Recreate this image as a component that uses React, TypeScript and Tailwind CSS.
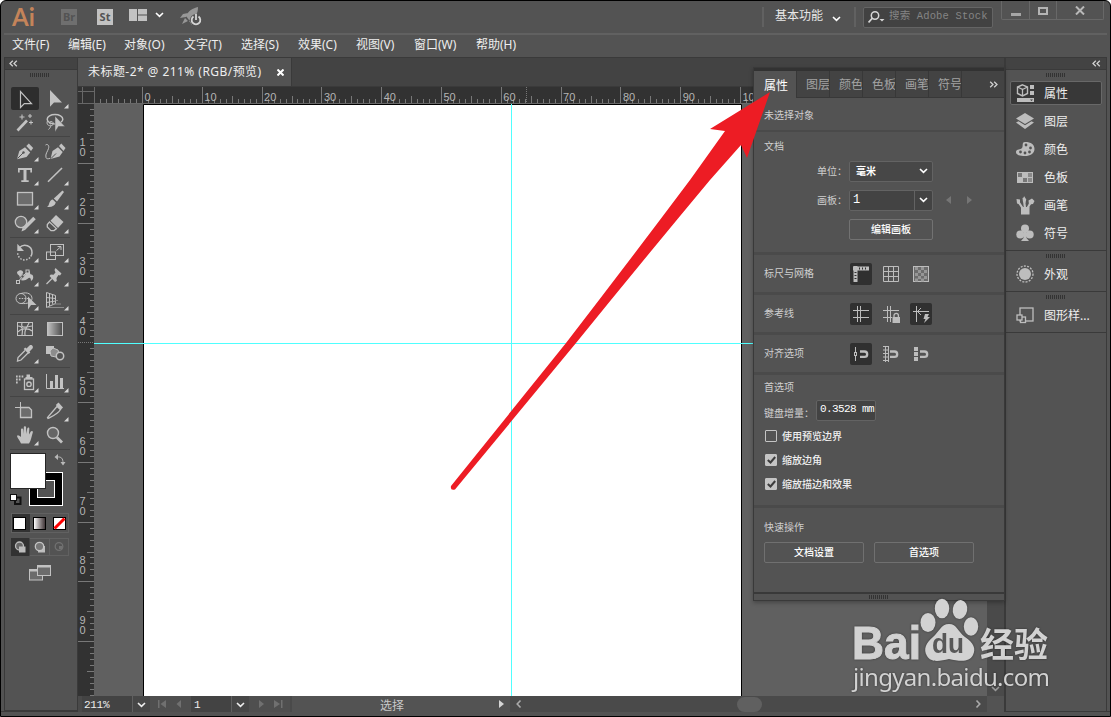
import { useState } from 'react'
import type { ReactNode } from 'react'

const menus = [
  { label: '文件(F)', width: 'w-[56px]' },
  { label: '编辑(E)', width: 'w-[56px]' },
  { label: '对象(O)', width: 'w-[60px]' },
  { label: '文字(T)', width: 'w-[57px]' },
  { label: '选择(S)', width: 'w-[57px]' },
  { label: '效果(C)', width: 'w-[58px]' },
  { label: '视图(V)', width: 'w-[58px]' },
  { label: '窗口(W)', width: 'w-[62px]' },
  { label: '帮助(H)', width: 'w-[56px]' },
]

// every tool is drawn in a 30x24 cell
const corner = <path d="M28.5 18v4.5H24z" fill="#d6d6d6" stroke="none" />

const toolGroups: { icon: ReactNode; more?: boolean; active?: boolean }[][] = [
  [
    { icon: <path d="M10.500 4.500V20.500L14.300 16.600H21.500Z" fill="none" strokeWidth="1.200" />, active: true },
    { icon: <path d="M10 4V20.800L14 16.600H22Z" stroke="none" />, more: true },
    {
      icon: (
        <>
          <path d="M7.500 20.500L17 10.500" strokeWidth="2.600" />
          <path d="M12 4.500v5M9.500 7h5M20 4v4M18 6h4M21 10.500v4M19 12.500h4" strokeWidth="1.100" />
        </>
      ),
    },
    {
      icon: (
        <>
          <ellipse cx="15" cy="9.300" rx="7.800" ry="4.700" fill="none" strokeWidth="1.500" />
          <path d="M7.500 11c-1.500 3 1 5.500 4 4.500 3-1 2-4-.5-4-2 0-2 2.500 0 2.500M11 15.500c-.5 2-1.500 3-2.500 4" fill="none" />
          <path d="M15 6V22L18.500 16.500H25Z" stroke="#535353" strokeWidth=".5" />
        </>
      ),
    },
  ],
  [
    {
      icon: (
        <>
          <path d="M7 20.200L9.300 12 15 8.300 20.200 13.500 16.500 18Z" stroke="none" />
          <path d="M16.300 7L18.800 4.600 23.200 9 21 12Z" stroke="none" />
          <path d="M7.500 19.500L13 14" stroke="#535353" />
          <circle cx="13.500" cy="13.500" r="1.200" fill="#535353" stroke="none" />
        </>
      ),
      more: true,
    },
    {
      icon: (
        <>
          <path d="M10.500 20L12.500 12 18 8.300 22.700 13 19.500 17.500Z" stroke="none" />
          <path d="M19 7L21.300 4.600 25.500 9 23.500 12Z" stroke="none" />
          <path d="M11 19.500L16 14.500" stroke="#535353" />
          <path d="M5.500 6c2-1.500 4 .5 3 3.500-.8 3-3.500 5.500-2.500 9 .5 1.500 2 1.500 4 .8" fill="none" />
        </>
      ),
    },
    {
      icon: <path d="M8 5H22V9.500H20.300V7H16.500V17.300H18.700V19H11.300V17.300H13.500V7H9.700V9.500H8Z" stroke="none" />,
      more: true,
    },
    { icon: <path d="M8 18.700L22 5" strokeWidth="1.600" />, more: true },
    { icon: <rect x="7.500" y="5.500" width="15" height="12.500" fill="#6c6c6c" strokeWidth="1.300" />, more: true },
    {
      icon: (
        <>
          <path d="M22.500 3.500L24 5 17 14.500 13.800 11.500Z" stroke="none" />
          <path d="M12.800 12.500l3 3c-.8 3.500-4.800 5-8.800 4.200 2-1 1.700-2.200 2.500-4.200.6-1.600 1.700-2.800 3.300-3z" stroke="none" />
        </>
      ),
      more: true,
    },
    {
      icon: (
        <>
          <circle cx="11" cy="11" r="5.700" fill="#6c6c6c" strokeWidth="1.300" />
          <path d="M14 17.500L24.500 7" strokeWidth="3.600" />
          <path d="M11.500 20.500L12.700 16 15.500 18.800Z" stroke="none" />
        </>
      ),
      more: true,
    },
    {
      icon: (
        <>
          <path d="M16 4L23.500 11 18 17 10.500 9.700Z" stroke="none" />
          <path d="M9.500 11L16.500 17.600 14 19.600H11L7.300 16V13.500Z" fill="none" strokeWidth="1.300" />
        </>
      ),
      more: true,
    },
  ],
  [
    {
      icon: (
        <>
          <path d="M9.500 7.500C14 3 22 5.500 22 12.500c0 1.500-.5 3-1.300 4" fill="none" strokeWidth="1.500" />
          <path d="M20 17.500C16 22 8 20 7.700 13" fill="none" strokeWidth="1.500" strokeDasharray="1.500 1.500" />
          <path d="M7.300 3.800V11H14Z" stroke="none" />
        </>
      ),
      more: true,
    },
    {
      icon: (
        <>
          <rect x="10.500" y="4.500" width="13" height="11" fill="none" />
          <rect x="6.500" y="12" width="9" height="7.500" fill="none" />
          <path d="M16.500 10.500L20.500 7M17.500 6.500H21V10" fill="none" />
        </>
      ),
      more: true,
    },
    {
      icon: (
        <>
          <path d="M7 8c3-3 6-2 6.500 1 .6 3 2 1.500 3-1 1.200-3 3.500-2 3.500.5s1.500 1.500 2.500 2.500c1.500 2 .5 5-1.500 6 0-3-1.500-4-3-2.500-2 2-5 2.500-8 1.500-1-2 .5-3-1-4.500-1-1-2-1.500-2-3.500z" stroke="none" />
          <path d="M7.500 18.500L15 8.500" stroke="#535353" strokeWidth="2.500" />
          <path d="M7.500 18.500L12 13 17 8" />
          <rect x="6.500" y="16.500" width="3" height="3" fill="#535353" />
          <circle cx="12.500" cy="12.500" r="1.700" fill="#535353" />
          <rect x="16" y="6" width="3" height="3" fill="#535353" />
        </>
      ),
      more: true,
    },
    {
      icon: (
        <>
          <path d="M15.500 4L21.500 9.500 20 11.500 18.500 11 16.500 14 16.800 17 15 18 9.500 12 10.800 10.500 13.500 10.700 15.500 8.500 14.500 6Z" stroke="none" />
          <path d="M12 14.500L6.500 20" strokeWidth="1.300" />
        </>
      ),
      more: true,
    },
    {
      icon: (
        <>
          <circle cx="11" cy="10.500" r="5" fill="none" />
          <path d="M11 5.500C18 3.500 22 6.500 22 10.500S17 16 11.500 15.500" fill="none" />
          <path d="M9 10.500H19" strokeDasharray="1.500 1.200" />
          <path d="M18 8.500V21.500L21 17H26.500Z" stroke="none" />
        </>
      ),
      more: true,
    },
    {
      icon: (
        <>
          <path d="M6.500 4.500L15.500 7.500V15.500L6.500 19.500ZM9.500 5.500V18M12.500 6.500V16.500M6.500 9.500L15.500 10.500M6.500 14.500L15.500 13" fill="none" />
          <path d="M15.500 12.500H18M12 16H21M8 19.500H24" stroke="#8c8c8c" />
        </>
      ),
      more: true,
    },
  ],
  [
    {
      icon: (
        <>
          <rect x="7.500" y="5.500" width="15" height="13" fill="none" />
          <path d="M8 9c5 0 5 4 4 9.500M12 6c-2 6 5 4 10 3M8 15c3-4 11-4 14-1M15 18c-1-5 2-8 4-12" fill="none" strokeWidth="1.200" />
        </>
      ),
    },
    {
      icon: (
        <>
          <defs>
            <linearGradient id="toolGradient">
              <stop offset="0" stopColor="#c2c2c2" />
              <stop offset="1" stopColor="#4a4a4a" />
            </linearGradient>
          </defs>
          <rect x="7.500" y="5.500" width="15" height="13" fill="url(#toolGradient)" />
        </>
      ),
    },
    {
      icon: (
        <>
          <path d="M16.500 7.500l3-3c2-1.500 4.500 1 3 3l-3 3 .8 1-1.600 1.500-5-5L15.200 6.500z" stroke="none" />
          <path d="M15 9.500L8 16.500 7.500 20 11 19 18 12" fill="none" strokeWidth="1.300" />
        </>
      ),
      more: true,
    },
    {
      icon: (
        <>
          <rect x="6" y="5" width="8" height="8" stroke="none" />
          <path d="M10 10l3-3 5 2 1 4-3 3-5-1z" fill="#8d8d8d" strokeWidth="1" />
          <circle cx="20" cy="15" r="3.700" fill="#535353" strokeWidth="1.500" />
        </>
      ),
    },
  ],
  [
    {
      icon: (
        <>
          <rect x="14.500" y="9" width="9" height="10.500" fill="none" strokeWidth="1.300" />
          <path d="M16.500 7V4.500H20V7H22.500V9H15.500V7Z" stroke="none" />
          <circle cx="19" cy="14.200" r="2.200" fill="none" strokeWidth="1.400" />
          <path d="M6 6.500H13.500M6 9.500H11M6 12.500H8" strokeWidth="1.800" strokeDasharray="1.700 1.100" />
        </>
      ),
      more: true,
    },
    {
      icon: (
        <>
          <path d="M6.500 4V18.500H24" fill="none" />
          <path d="M10 11h3v7h-3zM15 5h3v13h-3zM20 8h3v10h-3z" stroke="none" />
        </>
      ),
      more: true,
    },
  ],
  [
    {
      icon: (
        <>
          <path d="M5 8.500H13M10.500 3V10" fill="none" />
          <path d="M10.500 8.500H19L21.500 11V18.500H10.500Z" fill="#6c6c6c" strokeWidth="1.300" />
        </>
      ),
    },
    {
      icon: (
        <>
          <path d="M17 7.500L7.500 18.500 8 19.500C13 17 18 15 20.500 10.500Z" fill="none" strokeWidth="1.300" />
          <path d="M15.800 6L18.500 3.500 23 8.500 20.500 11Z" stroke="none" />
        </>
      ),
      more: true,
    },
    {
      icon: (
        <path
          d="M11 20.500C9.500 17 7 14.500 7 13c.5-1.500 2-.8 4 1V6.500c0-1.500 2-1.500 2.300 0l.5 4.500V4.500c0-1.600 2.200-1.600 2.300 0V11l1.200-5.500c.4-1.500 2.200-1.200 2 .4L19 11.500 20.800 8.500c.8-1.200 2.500-.4 2 .9C21.500 13 21 18 19 20.500Z"
          stroke="none"
        />
      ),
      more: true,
    },
    {
      icon: (
        <>
          <circle cx="13" cy="10" r="5.500" fill="#666" strokeWidth="1.400" />
          <path d="M17 14.500L22 19.500" strokeWidth="2.800" />
        </>
      ),
    },
  ],
]

const swatchIcon = (
  <>
    <rect x="1" y="4" width="16" height="11" />
    <path d="M2 5h4v4H2zM7 10h4v4H7z" fill="#777" />
    <path d="M12 5h4v4h-4zM12 10h4v4h-4z" fill="#8a8a8a" />
  </>
)

const dockItems = [
  {
    label: '属性',
    icon: (
      <>
        <path d="M6.500 .8L11.500 3V9.500L6.500 12 1.500 9.500V3Z" fill="none" stroke="#bdbdbd" strokeWidth="1.400" />
        <path d="M1.500 3L6.500 5.500V12M6.500 5.500L11.500 3" fill="none" stroke="#bdbdbd" strokeWidth="1.300" />
        <path d="M14 1h4v4h-4zM14 7h4v4h-4zM1 14h17v4H1z" />
        <path d="M14 15.500h3l-1.500 1.500z" fill="#333" />
      </>
    ),
  },
  {
    label: '图层',
    icon: (
      <>
        <path d="M9 1L18 6.500 9 12 0 6.500Z" />
        <path d="M0 10.500l2.500-1.200L9 13.200l6.500-3.900L18 10.500 9 17Z" />
      </>
    ),
  },
  {
    label: '颜色',
    icon: (
      <>
        <path d="M9 2c6 0 9.500 2.500 9.500 7S14 16 9 16c-5 0-9-1-9-4 0-3 3-2 5.500-3.500S5 2 9 2z" />
        <circle cx="10" cy="5" r="1.400" fill="#535353" />
        <circle cx="14.500" cy="8" r="1.400" fill="#535353" />
        <circle cx="13.500" cy="12" r="1.400" fill="#535353" />
        <circle cx="9" cy="13" r="1.400" fill="#535353" />
        <circle cx="4.500" cy="12" r="1.400" fill="#535353" />
      </>
    ),
  },
  { label: '色板', icon: swatchIcon },
  {
    label: '画笔',
    icon: (
      <>
        <path d="M5 11h8.500v7.500H5z" />
        <path d="M6.500 12L2.500 6M9 12L8 4M11.500 12L15 6" fill="none" stroke="#bdbdbd" strokeWidth="2.200" />
        <path d="M.5 3l3.500 .5V8.500L1 7.500zM6.500 2c1.500 0 1.500-2 1.500-2l2.300 3.500-1 3.500-2.300-1zM12.500 4.500L16 2.500l2.500 2.500-1.500 3-4 .5z" />
      </>
    ),
  },
  {
    label: '符号',
    icon: (
      <>
        <circle cx="9" cy="4.500" r="4" />
        <circle cx="4.300" cy="10.500" r="4" />
        <circle cx="13.700" cy="10.500" r="4" />
        <path d="M8 8h2l.5 6L13 17H5l2.500-3z" />
      </>
    ),
  },
]

function ToolIcon({ children, more, active }: { children: ReactNode; more?: boolean; active?: boolean }) {
  return (
    <div className="flex h-6 w-[30px] items-center justify-center">
      <div className={active ? 'my-px h-[23px] w-7 rounded-xs bg-[#2d2d2d]' : 'h-6 w-[30px]'}>
        <svg
          width="30"
          height="24"
          viewBox="0 0 30 24"
          fill="#c2c2c2"
          stroke="#c2c2c2"
          className={active ? '-ml-px' : ''}
        >
          {children}
          {more && corner}
        </svg>
      </div>
    </div>
  )
}

function Chevron({ className = '' }: { className?: string }) {
  return (
    <svg width="9" height="6" viewBox="0 0 9 6" className={className} fill="none" stroke="currentColor" strokeWidth="1.600">
      <path d="M1 1L4.500 4.300 8 1" />
    </svg>
  )
}

function Collapse({ flip }: { flip?: boolean }) {
  return (
    <svg width="9" height="7" viewBox="0 0 9 7" fill="none" stroke="#d0d0d0" strokeWidth="1.300" className={flip ? 'rotate-180' : ''}>
      <path d="M3.800 .8L1 3.500 3.800 6.200M7.800 .8L5 3.500 7.800 6.200" />
    </svg>
  )
}

function Grip() {
  return (
    <svg width="20" height="4" className="shrink-0" shapeRendering="crispEdges">
      <path d="M0 2H19" stroke="#333" strokeWidth="4" strokeDasharray="1 1" />
    </svg>
  )
}

function TitleBar() {
  return (
    <div className="flex h-8 shrink-0">
      <div className="flex flex-1 items-center pl-[11px]">
        <span className="w-[49px] font-[Lato] text-[24px] leading-none font-bold text-[#c4845a]">Ai</span>
        <span className="flex h-4 w-4 items-center justify-center bg-[#6f6f6f] text-[11px] font-bold text-[#535353]">Br</span>
        <span className="ml-5 flex h-4 w-4 items-center justify-center bg-[#c2c2c2] text-[11px] font-bold text-[#535353]">St</span>
        <svg width="18" height="12" className="ml-4 -mt-1" fill="#c2c2c2">
          <path d="M0 0h8v12H0zM9 0h9v5.500H9zM9 6.500h9V12H9z" />
        </svg>
        <Chevron className="ml-2 -mt-1 text-white" />
        <svg width="23" height="20" viewBox="0 0 23 20" className="ml-4" fill="#979797">
          <path d="M18 0c-5 1-10 4-12 9l3 4c6-2 9-6 9-13zM8 6L3 7 0 11l6-1zM14 11l-2 7-3-4zM5 11l-3 6 6-3z" />
          <circle cx="16" cy="13" r="6" fill="#535353" />
          <path d="M13.500 9.500a4.300 4.300 0 1 0 5 0M16 7v6" fill="none" stroke="#d5d5d5" strokeWidth="1.800" />
        </svg>
      </div>
      <div className="mt-[6px] h-5 w-0.5 bg-[#616161]" />
      <div className="flex w-[90px] items-center pl-[11px] text-[12px] text-[#e8e8e8]">
        <span className="-mt-0.5">基本功能</span>
        <Chevron className="mt-1 ml-[9px] text-white" />
      </div>
      <div className="mt-[6px] h-5 w-0.5 bg-[#616161]" />
      <div className="mt-[6px] ml-[7px] flex h-[21px] w-[130px] items-center rounded-xs border border-[#646464] bg-[#424242]">
        <svg width="17" height="13" viewBox="0 0 17 13" className="mx-1 shrink-0" fill="none" stroke="#d6d6d6">
          <circle cx="7" cy="4.500" r="3.700" strokeWidth="1.500" />
          <path d="M4.500 7L.5 11.500" strokeWidth="1.800" />
          <path d="M11.500 8h5l-2.500 2.500z" fill="#d6d6d6" stroke="none" />
        </svg>
        <span className="-mt-0.5 font-['Liberation_Mono','Noto_Sans_CJK_SC',monospace] text-[10.500px] tracking-[0.15px] whitespace-nowrap text-[#858585]">
          搜索 Adobe Stock
        </span>
      </div>
      <div className="ml-2 flex h-[19px] w-[103px] rounded-b-xs border border-t-0 border-[#686868]">
        <div className="flex w-[28px] items-center justify-center border-r border-[#686868]">
          <div className="mt-2 h-[3px] w-[10px] bg-[#a6a6a6]" />
        </div>
        <div className="flex w-[27px] items-center justify-center border-r border-[#686868]">
          <div className="mt-0.5 h-2 w-[10px] border-2 border-[#b4b4b4]" />
        </div>
        <div className="flex flex-1 items-center justify-center">
          <svg width="10" height="9" stroke="#b8b8b8" strokeWidth="2">
            <path d="M1 0.500L9 8.500M9 .5L1 8.500" />
          </svg>
        </div>
      </div>
      <div className="w-[6px]" />
    </div>
  )
}

function ColorControls() {
  return (
    <div className="-mt-px flex flex-col pl-[5px]">
      <svg width="60" height="62" viewBox="0 0 60 62" fill="none">
        <rect x="19.500" y="21.500" width="33" height="33" fill="#000" stroke="#fff" />
        <rect x="27.500" y="29.500" width="17" height="17" fill="#535353" stroke="#fff" />
        <rect x=".5" y="2.500" width="35" height="35" fill="#fff" stroke="#262626" />
        <path d="M47 6c4.500-.5 6 1.500 6 6" stroke="#b8b8b8" />
        <path d="M48 3v6L44.500 6zM50.500 11h5L53 14.500z" fill="#b8b8b8" />
        <rect x="5" y="46.500" width="5.500" height="6.500" stroke="#111" strokeWidth="2" />
        <rect x=".5" y="43.500" width="6" height="6" fill="#fff" stroke="#111" />
      </svg>
      <div className="ml-px flex h-5 w-[58px] items-center border border-[#616161]">
        <div className="flex h-full w-[18px] items-center bg-[#323232] pl-px">
          <div className="h-[13px] w-[13px] border border-black bg-white" />
        </div>
        <div className="w-5 pl-[3px]">
          <div className="h-[13px] w-[13px] border border-black bg-linear-to-r from-white to-[#42383a]" />
        </div>
        <svg width="13" height="13" className="ml-[3px]">
          <rect x=".5" y=".5" width="12" height="12" fill="#fff" stroke="#000" />
          <path d="M1.500 11.500L11.500 1.500" stroke="#f00" strokeWidth="3" />
        </svg>
      </div>
      <svg width="58" height="18" className="mt-[5px] ml-px">
        <rect x=".5" y=".5" width="57" height="17" fill="none" stroke="#616161" />
        <path d="M0 0h18.500v18H0z" fill="#323232" />
        <path d="M38.500 0v18" stroke="#616161" />
        <circle cx="8.500" cy="8" r="4" fill="#666" stroke="#bbb" strokeWidth="1.300" />
        <rect x="8" y="8.500" width="6.500" height="6" fill="#bdbdbd" />
        <rect x="27" y="8" width="7" height="6.500" fill="#bdbdbd" />
        <circle cx="28.500" cy="8.500" r="4.200" fill="#777" stroke="#c4c4c4" strokeWidth="1.300" />
        <circle cx="48" cy="8.500" r="3.800" fill="none" stroke="#717171" strokeWidth="1.300" />
        <rect x="48" y="8" width="3" height="3" fill="#717171" />
      </svg>
      <svg width="22" height="16" className="mt-[9px] ml-[19px]" stroke="#c2c2c2" fill="#6c6c6c">
        <rect x=".5" y="4.500" width="13" height="10.500" />
        <path d="M.5 5.500h13" strokeWidth="2" />
        <rect x="8.500" y=".5" width="13" height="10" />
        <path d="M8 1.500h14" strokeWidth="2" />
      </svg>
    </div>
  )
}

function ToolsPanel() {
  return (
    <div className="flex w-[73px] shrink-0 flex-col border border-r-0 border-[#3a3a3a]">
      <div className="flex h-3 shrink-0 items-center border-b border-[#3a3a3a] bg-[#434343] pl-1">
        <Collapse />
      </div>
      <div className="flex h-4 shrink-0 justify-center pt-[3px] pr-[3px]">
        <Grip />
      </div>
      {toolGroups.map((group, i) => (
        <div key={i} className="flex shrink-0 flex-col pl-[5px]">
          <div className="flex w-[60px] flex-wrap">
            {group.map((tool, j) => (
              <ToolIcon key={j} more={tool.more} active={tool.active}>
                {tool.icon}
              </ToolIcon>
            ))}
          </div>
          <div className="mt-0.5 mb-0.5 h-px w-[60px] bg-[#444]" />
        </div>
      ))}
      <ColorControls />
    </div>
  )
}

const MM = 5.98

function TopRuler() {
  const ticks = Array.from({ length: 118 }, (_, i) => i - 8)
  return (
    <svg width="909" height="17" className="block shrink-0 bg-[#323232] font-['Liberation_Sans',sans-serif] text-[11px]">
      {ticks.map((t) => {
        const x = Math.round(64 + t * MM) + 0.5
        const top = t % 10 === 0 ? 0 : t % 5 === 0 ? 9 : 12
        return <path key={t} d={`M${x} ${top}V16`} stroke="#787878" />
      })}
      {[0, 10, 20, 30, 40, 50, 60, 70, 80, 90, 100].map((n) => (
        <text key={n} x={66.5 + n * MM} y="14" fill="#b4b4b4">
          {n}
        </text>
      ))}
      <path d="M448.500 0V16" stroke="#777" strokeDasharray="1 1" />
      <path d="M0 0H16V17H0Z" fill="#323232" />
      <path d="M4.500 0V17M0 4.500H16M16.500 0V17M0 16.500H909" stroke="#686868" />
    </svg>
  )
}

function SideRuler() {
  const ticks = Array.from({ length: 99 }, (_, i) => i + 1)
  return (
    <svg width="16" height="592" className="block shrink-0 bg-[#323232] font-['Liberation_Sans',sans-serif] text-[11px]">
      {ticks.map((t) => {
        const y = Math.round(-1 + t * MM) + 0.5
        const left = t % 10 === 0 ? 0 : t % 5 === 0 ? 9 : 12
        return <path key={t} d={`M${left} ${y}H16`} stroke="#787878" strokeDasharray={t === 40 ? '1 1' : undefined} />
      })}
      {[1, 2, 3, 4, 5, 6, 7, 8, 9].map((n) => (
        <g key={n} fill="#b4b4b4">
          <text x="1.500" y={n * 59.8 - 18}>{n}</text>
          <text x="1.500" y={n * 59.8 - 8}>0</text>
        </g>
      ))}
    </svg>
  )
}

function StatusBar() {
  return (
    <div className="flex h-4 shrink-0 items-center bg-[#4a4a4a] font-['Liberation_Mono',monospace] text-[11px] text-[#eee]">
      <div className="ml-1 h-4 w-[50px] bg-[#434343] pl-0.5 leading-[18px] tracking-[-0.3px]">211%</div>
      <div className="flex h-4 w-[18px] items-center justify-center border-l border-[#606060] bg-[#474747]">
        <Chevron className="mt-0.5" />
      </div>
      <svg width="41" height="16" fill="#707070" className="bg-[#4f4f4f]">
        <path d="M8 4h1.500v8H8zM16 4v8L10.500 8zM31 4v8L26.500 8z" />
      </svg>
      <div className="h-4 w-[40px] bg-[#434343] pl-[3px] leading-[18px]">1</div>
      <div className="flex h-4 w-[18px] items-center justify-center border-l border-[#606060] bg-[#474747]">
        <Chevron className="mt-0.5" />
      </div>
      <svg width="41" height="16" fill="#707070" className="bg-[#4f4f4f]">
        <path d="M10 4v8L15 8zM25 4v8L31 8zM32 4h1.500v8H32z" />
      </svg>
      <div className="ml-0.5 h-4 w-[200px] bg-[#535353] text-center font-['Noto_Sans_CJK_SC',sans-serif] text-[12px] leading-[18px] text-[#c8c8c8]">
        选择
      </div>
      <svg width="18" height="16" className="bg-[#535353]">
        <path d="M7 4v8L12 8z" fill="#d6d6d6" />
      </svg>
      <Chevron className="ml-1 rotate-90 text-[#aaa]" />
      <div className="ml-[214px] h-[15px] w-[25px] rounded-full bg-[#606060]" />
      <Chevron className="ml-[212px] -rotate-90 text-[#aaa]" />
      <div className="ml-[4px] h-4 flex-1 bg-[#535353]" />
    </div>
  )
}

function Document() {
  return (
    <div className="flex w-[926px] shrink-0 flex-col">
      <div className="flex h-[30px] shrink-0 border-y border-[#3a3a3a] bg-[#434343]">
        <div className="flex w-[214px] items-center justify-between border-r border-[#3a3a3a] bg-[#535353] pr-[7px] pl-[10px] text-[12px] text-[#eee]">
          <span className="tracking-[0.45px] whitespace-nowrap">未标题-2* @ 211% (RGB/预览)</span>
          <svg width="7" height="7" stroke="#fff" strokeWidth="2">
            <path d="M.5 .5L6.500 6.500M6.500 .5L.5 6.500" />
          </svg>
        </div>
      </div>
      <TopRuler />
      <div className="flex h-[592px] shrink-0">
        <SideRuler />
        <div className="flex w-[893px] bg-[#606060]">
          <svg width="893" height="592">
            <path d="M49.500 592V.5H647.500V592" fill="#fff" stroke="#000" />
            <path d="M0 239.500H893M417.500 0V592" stroke="#4fffff" />
          </svg>
        </div>
        <div className="flex flex-1 items-end justify-center bg-[#4a4a4a] pb-1">
          <Chevron className="text-[#999]" />
        </div>
      </div>
      <StatusBar />
    </div>
  )
}

function DockItem({ label, icon, active }: { label: string; icon: ReactNode; active?: boolean }) {
  return (
    <div
      className={`mx-1 flex h-6 items-center rounded-xs border pl-[5px] text-[12px] text-[#eee] ${
        active ? 'border-[#686868] bg-[#383838]' : 'border-transparent'
      }`}
    >
      <svg width="19" height="19" viewBox="0 0 19 19" fill="#bdbdbd">
        {icon}
      </svg>
      <span className="mt-0.5 ml-[9px] whitespace-nowrap">{label}</span>
    </div>
  )
}

function Dock() {
  return (
    <div className="flex w-[102px] shrink-0 flex-col border-x border-t border-[#3a3a3a]">
      <div className="flex h-3 items-center justify-end border-b border-[#3a3a3a] bg-[#434343] pr-[5px]">
        <Collapse />
      </div>
      <div className="flex h-[181px] flex-col border-b border-[#3a3a3a]">
        <div className="mb-[4px] flex justify-center pt-[3px]">
          <Grip />
        </div>
        <div className="flex flex-col gap-1">
          {dockItems.map((item, i) => (
            <DockItem key={item.label} label={item.label} icon={item.icon} active={i === 0} />
          ))}
        </div>
      </div>
      <div className="flex h-[41px] flex-col border-b border-[#3a3a3a]">
        <div className="mb-1 flex justify-center pt-[3px]">
          <Grip />
        </div>
        <DockItem
          label="外观"
          icon={
            <>
              <circle cx="9" cy="9" r="6" />
              <circle cx="9" cy="9" r="8" fill="none" stroke="#bdbdbd" strokeWidth="1.300" strokeDasharray="2 1.300" />
            </>
          }
        />
      </div>
      <div className="flex h-[41px] flex-col border-b border-[#3a3a3a]">
        <div className="mb-1 flex justify-center pt-[3px]">
          <Grip />
        </div>
        <DockItem
          label="图形样..."
          icon={
            <g fill="none" stroke="#bdbdbd" strokeWidth="1.300">
              <rect x="4" y="2" width="13" height="13" />
              <rect x="4.500" y="11" width="5" height="5.500" fill="#535353" />
              <rect x="1" y="9" width="5" height="5" fill="#535353" />
            </g>
          }
        />
      </div>
    </div>
  )
}

function IconToggle({ on, children }: { on?: boolean; children: ReactNode }) {
  return (
    <div className={`mr-2 flex h-[22px] w-[22px] items-center justify-center rounded-xs ${on ? 'bg-[#303030]' : ''}`}>
      <svg width="18" height="18" viewBox="0 0 18 18" fill="none" stroke="#bdbdbd">
        {children}
      </svg>
    </div>
  )
}

const magnet = <path d="M8 6.500h4.500a2.700 2.700 0 0 1 0 5.400H8" strokeWidth="2.300" />

function OptionRow({ label, children }: { label: string; children: ReactNode }) {
  return (
    <div className="flex h-10 items-center border-b-3 border-[#4a4a4a] pl-[10px]">
      <span className="w-[86px]">{label}</span>
      {children}
    </div>
  )
}

function Checkbox({ label, initial }: { label: string; initial?: boolean }) {
  const [checked, setChecked] = useState(!!initial)

  return (
    <div className="flex h-6 cursor-pointer items-center text-[#f0f0f0]" onClick={() => setChecked(!checked)}>
      <div
        className={`mr-[5px] ml-px flex h-3 w-3 items-center justify-center rounded-[1px] border border-[#c4c4c4] ${
          checked ? 'bg-[#c4c4c4]' : ''
        }`}
      >
        {checked && (
          <svg width="9" height="8" fill="none" stroke="#3c3c3c" strokeWidth="2">
            <path d="M.8 4L3.500 6.500 8.200 1" />
          </svg>
        )}
      </div>
      <span className="font-medium">{label}</span>
    </div>
  )
}

function PropertiesPanel() {
  return (
    <div className="absolute top-[66px] left-[752px] flex h-[534px] w-[252px] flex-col border border-[#393939] bg-[#535353] text-[10px] text-[#cfcfcf] shadow-[0_2px_4px_#0004]">
      <div className="h-[3px] shrink-0 bg-[#323232]" />
      <div className="flex h-[27px] shrink-0 bg-[#434343] text-[12px] text-[#a2a2a2]">
        <div className="flex w-[43px] items-center border-r border-[#383838] bg-[#535353] pt-0.5 pl-[10px] text-white">属性</div>
        {['图层', '颜色', '色板', '画笔', '符号'].map((tab) => (
          <div
            key={tab}
            className="flex w-[33px] items-center overflow-hidden border-r border-b border-[#383838] pt-0.5 pl-[9px] whitespace-nowrap"
          >
            {tab}
          </div>
        ))}
        <div className="flex flex-1 items-center justify-end border-b border-[#383838] pr-[6px]">
          <Collapse flip />
        </div>
      </div>
      <div className="flex h-[34px] shrink-0 items-center border-b-2 border-[#4a4a4a] pt-0.5 pl-[10px]">未选择对象</div>
      <div className="flex h-[123px] shrink-0 flex-col border-b-3 border-[#4a4a4a] pt-[7px] pl-[10px]">
        <div className="leading-[15px]">文档</div>
        <div className="mt-[7px] flex h-5 items-center">
          <span className="w-[85px] pr-[2px] text-right">单位：</span>
          <div className="flex h-[21px] w-[84px] items-center justify-between rounded-xs border border-[#636363] bg-[#474747] pr-1 pl-[6px] text-white">
            <span className="font-bold">毫米</span>
            <Chevron />
          </div>
        </div>
        <div className="mt-[9px] flex h-5 items-center">
          <span className="w-[85px] pr-[2px] text-right">画板：</span>
          <div className="flex h-[21px] w-[84px] items-center rounded-xs border border-[#636363] bg-[#434343] text-white">
            <span className="flex-1 pl-[3px] font-['Liberation_Mono',monospace] text-[12px]">1</span>
            <div className="flex h-full w-[18px] items-center justify-center border-l border-[#636363]">
              <Chevron />
            </div>
          </div>
          <svg width="28" height="10" className="ml-3" fill="#757575">
            <path d="M6 1v8L1 5zM22 1v8L27 5z" />
          </svg>
        </div>
        <button className="mt-[9px] ml-[85px] h-[21px] w-[84px] shrink-0 rounded-xs border border-[#727272] font-medium text-white">编辑画板</button>
      </div>
      <OptionRow label="标尺与网格">
        <IconToggle on>
          <path d="M1 3.500H17M3.500 1V17" strokeWidth="4" />
          <path d="M7 3.500H16M3.500 7V16" stroke="#303030" strokeWidth="2" strokeDasharray="1 2" />
        </IconToggle>
        <IconToggle>
          <path d="M1.500 1.500h15v15h-15zM6.500 1v16M11.500 1v16M1 6.500h16M1 11.500h16" />
        </IconToggle>
        <IconToggle>
          <rect x="1.500" y="1.500" width="15" height="15" fill="#6c6c6c" />
          <path d="M3 3.500h12M3 9.500h12M3 15h12" strokeWidth="3" strokeDasharray="3 3" stroke="#969696" />
          <path d="M6 6.500h9M6 12.500h9" strokeWidth="3" strokeDasharray="3 3" stroke="#969696" />
        </IconToggle>
      </OptionRow>
      <OptionRow label="参考线">
        <IconToggle on>
          <path d="M5.500 1v16M8.500 1v16M1 5.500h16M1 12.500h16" />
        </IconToggle>
        <IconToggle>
          <path d="M5.500 1v16M8.500 1v16M1 5.500h16M1 12.500h9" />
          <path d="M10.500 12h7.500v6h-7.500z" fill="#bdbdbd" stroke="none" />
          <path d="M12 12v-1.500a2.200 2.200 0 0 1 4.400 0V12" strokeWidth="1.300" />
        </IconToggle>
        <IconToggle on>
          <path d="M4.500 1v16M1 6.500h16M9 3L5.500 6.500 9 10" />
          <path d="M13 9h4l-1.500 3H18l-6 6 1.500-4H11.500z" fill="#bdbdbd" stroke="none" />
        </IconToggle>
      </OptionRow>
      <OptionRow label="对齐选项">
        <IconToggle on>
          <path d="M3.500 2v14" />
          <rect x="2.500" y="7.500" width="2" height="3" fill="#303030" />
          {magnet}
        </IconToggle>
        <IconToggle>
          <path d="M3.500 1v16M6.500 1v16M1 1.500h6M1 5h6M1 8.500h6M1 12h6M1 15.500h6" />
          {magnet}
        </IconToggle>
        <IconToggle>
          <path d="M2 2h4v4H2zM2 7h4v4H2zM2 12h4v4H2z" fill="#bdbdbd" stroke="none" />
          {magnet}
        </IconToggle>
      </OptionRow>
      <div className="flex h-[133px] shrink-0 flex-col border-b-3 border-[#4a4a4a] pt-[5px] pl-[10px]">
        <div className="leading-[15px]">首选项</div>
        <div className="mt-[5px] mb-[3px] flex h-[21px] items-center">
          <span className="mt-1.5 w-[52px] whitespace-nowrap">键盘增量：</span>
          <div className="flex h-[21px] w-[60px] items-center rounded-xs border border-[#636363] bg-[#434343] pb-0.5 pl-[3px] font-['Liberation_Mono',monospace] text-[11px] tracking-[-0.6px] whitespace-nowrap text-white">
            0.3528 mm
          </div>
        </div>
        <Checkbox label="使用预览边界" />
        <Checkbox label="缩放边角" initial />
        <Checkbox label="缩放描边和效果" initial />
      </div>
      <div className="flex flex-1 flex-col pt-[12px] pl-[10px]">
        <div className="leading-[15px]">快速操作</div>
        <div className="mt-[7px] flex gap-[10px]">
          <button className="h-[21px] w-[100px] rounded-xs border border-[#707070] font-medium text-white">文档设置</button>
          <button className="h-[21px] w-[100px] rounded-xs border border-[#707070] font-medium text-white">首选项</button>
        </div>
      </div>
      <div className="flex h-2 shrink-0 justify-center border-t-2 border-[#393939] pt-px">
        <Grip />
      </div>
    </div>
  )
}

function Watermark() {
  return (
    <svg
      width="210"
      height="100"
      viewBox="850 595 210 100"
      className="pointer-events-none absolute top-[594px] left-[849px] drop-shadow-[0_0_1px_#0006]"
      fill="#d2d2d2"
    >
      <text
        x="852"
        y="659"
        textLength="69"
        lengthAdjust="spacingAndGlyphs"
        stroke="#d2d2d2"
        className="font-['Liberation_Sans'] text-[46px] font-bold"
      >
        Bai
      </text>
      <ellipse cx="928" cy="622.500" rx="7.500" ry="9.500" />
      <ellipse cx="942" cy="608.500" rx="7.200" ry="9.800" />
      <ellipse cx="960" cy="609.500" rx="7.200" ry="9.500" transform="rotate(10 960 609.500)" />
      <ellipse cx="971" cy="626.500" rx="7.200" ry="9.300" />
      <path d="M949 624c8 0 9 8 16 13 9 6 11 12 8 18-4 8-14 6-24 4-9 2-18 4-22-3-4-7-1-13 6-19 6-5 8-13 16-13z" />
      <text x="932" y="653" fill="#585858" textLength="32" lengthAdjust="spacingAndGlyphs" className="font-['Liberation_Sans'] text-[27px] font-bold">
        du
      </text>
      <text x="980" y="657" textLength="68" className="font-['Noto_Sans_CJK_SC'] text-[34px] font-bold">
        经验
      </text>
      <text x="853" y="686" textLength="197" className="font-['Noto_Sans'] text-[24px]">
        jingyan.baidu.com
      </text>
    </svg>
  )
}

export default function App() {
  return (
    <div className="relative flex h-[717px] w-[1111px] flex-col overflow-hidden rounded-t-md border border-black bg-[#535353] font-['Noto_Sans','Noto_Sans_CJK_SC',sans-serif] leading-normal">
      <TitleBar />
      <div className="mx-[3px] h-0.5 shrink-0 bg-[#616161]" />
      <div className="flex h-[22px] shrink-0 items-center pb-[3px] pl-[11px] text-[12px] text-[#eee]">
        {menus.map((menu) => (
          <div key={menu.label} className={`${menu.width} shrink-0 whitespace-nowrap`}>
            {menu.label}
          </div>
        ))}
      </div>
      <div className="flex h-[655px] shrink-0 border-b border-[#3a3a3a] pl-[3px]">
        <ToolsPanel />
        <div className="w-px shrink-0 bg-[#3a3a3a]" />
        <Document />
        <div className="w-px shrink-0 bg-[#3a3a3a]" />
        <Dock />
      </div>
      <PropertiesPanel />
      <svg width="1111" height="717" className="pointer-events-none absolute -top-px -left-px">
        <path
          d="M770 92L710 129 725 131 690 180Q630 260 566 343L451 486Q450 491 455 489.500L576 343Q640 264 710 180L741 145 747 158Z"
          fill="#ed1c24"
        />
      </svg>
      <Watermark />
    </div>
  )
}
